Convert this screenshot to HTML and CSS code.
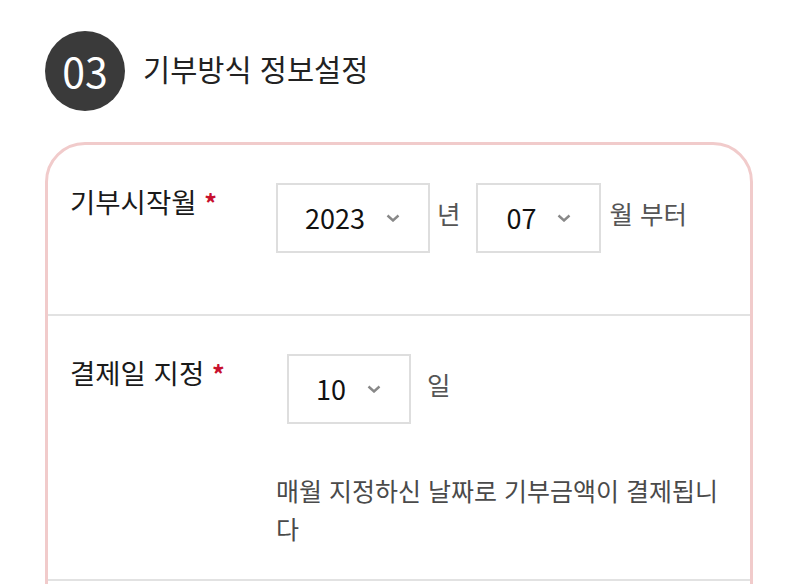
FILE: index.html
```html
<!DOCTYPE html>
<html lang="ko">
<head>
<meta charset="utf-8">
<title>기부방식 정보설정</title>
<link rel="stylesheet" href="styles.css">
</head>
<body>
<div class="page">
  <div class="section-head">
    <span class="step-num">03</span>
    <h2 class="section-title">기부방식 정보설정</h2>
  </div>
  <div class="card">
    <div class="row">
      <div class="label">기부시작월 <span class="req">*</span></div>
      <div class="field">
        <div class="select select-year">
          <span class="select-value">2023</span>
          <svg class="chev" width="14" height="8" viewBox="0 0 14 8"><polyline points="1.5,1.5 7,6.5 12.5,1.5" fill="none" stroke="#888" stroke-width="2.4"/></svg>
        </div>
        <span class="unit unit-year">년</span>
        <div class="select select-month">
          <span class="select-value">07</span>
          <svg class="chev" width="14" height="8" viewBox="0 0 14 8"><polyline points="1.5,1.5 7,6.5 12.5,1.5" fill="none" stroke="#888" stroke-width="2.4"/></svg>
        </div>
        <span class="unit unit-month">월 부터</span>
      </div>
    </div>
    <div class="row row-pay">
      <div class="label">결제일 지정 <span class="req">*</span></div>
      <div class="field-col">
        <div class="field">
          <div class="select select-day">
            <span class="select-value">10</span>
            <svg class="chev" width="14" height="8" viewBox="0 0 14 8"><polyline points="1.5,1.5 7,6.5 12.5,1.5" fill="none" stroke="#888" stroke-width="2.4"/></svg>
          </div>
          <span class="unit unit-day">일</span>
        </div>
        <p class="note">매월 지정하신 날짜로 기부금액이 결제됩니다</p>
      </div>
    </div>
  </div>
</div>
</body>
</html>
```

FILE: styles.css
```css
html, body {
  margin: 0;
  padding: 0;
  background: #fff;
  overflow: hidden;
}
body {
  font-family: "Noto Sans CJK KR", "Noto Sans", sans-serif;
  color: #222;
}
.page {
  padding: 31px 0 0 45px;
}
.section-head {
  display: flex;
  align-items: center;
  gap: 18px;
}
.step-num {
  width: 80px;
  height: 80px;
  border-radius: 50%;
  background: #3a3a3a;
  color: #fff;
  display: flex;
  align-items: center;
  justify-content: center;
  font-family: "Noto Sans CJK KR", "Noto Sans", sans-serif;
  font-size: 41px;
  font-weight: 400;
  line-height: 1;
  padding-bottom: 2px;
  box-sizing: border-box;
}
.section-title {
  margin: 0;
  font-size: 29.5px;
  font-weight: 400;
  color: #222;
  line-height: 1.4;
  padding-bottom: 4px;
}
.card {
  margin-top: 31px;
  width: 702px;
  min-height: 620px;
  border: 3px solid #f1cbcb;
  border-radius: 40px 40px 0 0;
  box-sizing: content-box;
}
.row {
  display: flex;
  align-items: flex-start;
  padding: 38px 22px 61px 22px;
  border-bottom: 2px solid #e2e2e2;
}
.row-pay {
  padding-bottom: 32px;
}
.label {
  width: 206px;
  flex: none;
  font-size: 27.5px;
  font-weight: 400;
  line-height: 37px;
  color: #1a1a1a;
}
.req {
  color: #c8102e;
  font-weight: 700;
  font-size: 25px;
}
.field {
  display: flex;
  align-items: flex-start;
}
.field-col {
  display: flex;
  flex-direction: column;
}
.select {
  box-sizing: border-box;
  height: 70px;
  border: 2px solid #dedede;
  display: flex;
  align-items: center;
  justify-content: space-between;
  padding: 0 28px 0 27px;
  font-family: "Noto Sans CJK KR", "Noto Sans", sans-serif;
  font-size: 27px;
  color: #111;
}
.select-year { width: 154px; }
.select-month { width: 125px; padding-left: 28px; }
.select-day { width: 124px; margin-left: 11px; padding-left: 27px; }
.select-value {
  line-height: 1;
  padding-bottom: 2px;
}
.chev {
  display: block;
  flex: none;
}
.unit {
  font-size: 25.5px;
  line-height: 36px;
  margin-top: 12px;
  color: #555;
}
.unit-year { margin-left: 7px; margin-right: 16px; }
.unit-month { margin-left: 8px; }
.unit-day { margin-left: 16px; }
.note {
  margin: 47px 0 0 0;
  max-width: 462px;
  font-size: 25px;
  font-weight: 400;
  line-height: 38px;
  color: #4a4a4a;
}
```
